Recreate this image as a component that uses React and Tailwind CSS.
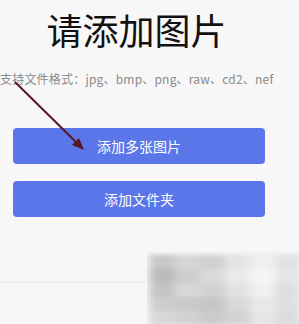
import React from 'react';

const cjk = { fontFamily: '"Microsoft YaHei", "Noto Sans CJK SC", "Noto Sans", sans-serif' };

const Mosaic = () => {
  const cells = [
    ['#c8c8c8', '#d6d6d6', '#d0d0d0', '#e4e4e4', '#efefef', '#e2e2e2'],
    ['#bcbcbc', '#cdcdcd', '#dadada', '#eaeaea', '#f5f5f5', '#e6e6e6'],
    ['#c4c4c4', '#d8d8d8', '#d2d2d2', '#e2e2e2', '#f0f0f0', '#dfdfdf'],
    ['#cdcdcd', '#cacaca', '#c6c6c6', '#d9d9d9', '#e8e8e8', '#e0e0e0'],
    ['#d8d8d8', '#d2d2d2', '#cbcbcb', '#d3d3d3', '#e6e6e6', '#dcdcdc'],
  ];
  return (
    <svg width="152" height="72" viewBox="0 0 152 72">
      <defs>
        <filter id="blur" x="-10%" y="-10%" width="120%" height="120%">
          <feGaussianBlur stdDeviation="4 2" />
        </filter>
      </defs>
      <rect x="0" y="0" width="152" height="72" fill="#f2f2f2" />
      <g filter="url(#blur)">
        {cells.map((row, r) =>
          row.map((c, i) => (
            <rect key={`${r}-${i}`} x={3 + i * 25} y={3 + r * 14} width="25" height="14" fill={c} />
          ))
        )}
      </g>
    </svg>
  );
};

const App = () => {
  return (
    <div className="relative w-[299px] h-[324px] overflow-hidden bg-[#f7f7f7]" style={cjk}>
      <div className="w-[273px] flex flex-col items-center">
        <h1 className="mt-[6px] text-[36px] leading-[46px] text-[#111] font-normal">请添加图片</h1>
      </div>
      <p className="mt-[20px] text-[12px] leading-[14px] tracking-[0.2px] text-[#8a8a8a] whitespace-nowrap">
        支持文件格式：jpg、bmp、png、raw、cd2、nef
      </p>

      <div className="mt-[42px] ml-[13px] w-[252px] flex flex-col gap-[17px]">
        <button className="h-[36px] rounded-[4px] bg-[#5a76e8] text-white text-[14px]">添加多张图片</button>
        <button className="h-[36px] rounded-[4px] bg-[#5a76e8] text-white text-[14px]">添加文件夹</button>
      </div>

      <div className="mt-[64px] w-[146px] h-[2px] bg-[#ececec]" />

      <svg className="absolute left-0 top-0" width="299" height="324" viewBox="0 0 299 324">
        <line x1="15" y1="82" x2="80" y2="146" stroke="#5a1426" strokeWidth="2" />
        <polygon points="84,150 72,145 79,138" fill="#5a1426" />
      </svg>

      <div className="absolute left-[147px] top-[252px]">
        <Mosaic />
      </div>
    </div>
  );
};

export default App;
